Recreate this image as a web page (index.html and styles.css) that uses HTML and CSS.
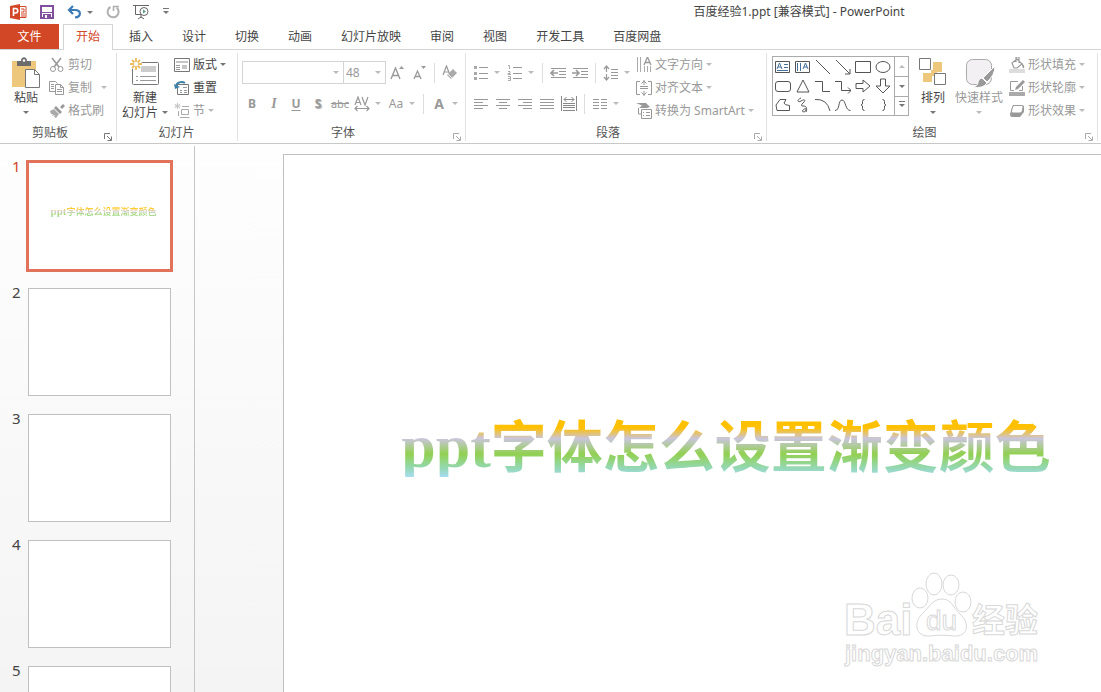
FILE: index.html
```html
<!DOCTYPE html>
<html lang="zh-CN">
<head>
    <meta charset="UTF-8">
    <meta name="viewport" content="width=device-width, initial-scale=1.0">
    <title>百度经验1.ppt - PowerPoint</title>
    <link rel="stylesheet" href="styles.css">
</head>
<body>
    <header class="titlebar">
        <div class="quick-access">
            <svg class="app-icon" width="17" height="16" viewBox="0 0 17 16"><path d="M0 2l10-2v16L0 14z" fill="#d24726"/><path d="M10 2.500h6v11h-6" fill="#fff" stroke="#d24726"/><path d="M11 5h3v3h-3M11 10h4M11 12h4" fill="none" stroke="#d24726"/><path d="M3.500 12V4.500h2a2 2 0 0 1 0 4.500h-2" fill="none" stroke="#fff" stroke-width="1.600"/></svg>
            <button class="quick save" aria-label="保存"><svg width="14" height="14" viewBox="0 0 14 14"><path d="M1 1h12v12H1z" fill="#fff" stroke="#80509f" stroke-width="2"/><path d="M2 7.500h10" stroke="#80509f"/><path d="M3 9h8v4H3z" fill="#80509f"/><path d="M5 10h2v3H5z" fill="#fff"/></svg></button>
            <button class="quick undo" aria-label="撤消"><svg width="15" height="14" viewBox="0 0 15 14"><path d="M2 5h6c7 0 6 7 0 7.500M6 1L2 5l4 4" fill="none" stroke="#3b78b5" stroke-width="2.200"/></svg><i class="caret"></i></button>
            <button class="quick redo" aria-label="重复"><svg width="14" height="14" viewBox="0 0 14 14"><path d="M4.500 2a5.500 5.500 0 1 0 6 .5" fill="none" stroke="#b0b0b0" stroke-width="2"/><path d="M7.500 6V1.500H13" fill="none" stroke="#b0b0b0" stroke-width="1.600"/></svg></button>
            <button class="quick show" aria-label="从头开始"><svg width="17" height="16" viewBox="0 0 17 16"><path d="M0 1.500h16M2.500 2v8.500H8M8 11v3M5 15l3-2 3 2" fill="none" stroke="#666"/><circle cx="11" cy="7.500" r="4" fill="#fff" stroke="#666"/><path d="M10 5.500l3 2-3 2z" fill="#5d9b83"/></svg></button>
            <button class="quick more" aria-label="自定义快速访问工具栏"><i class="caret barred"></i></button>
        </div>
        <div class="window-title">百度经验1.ppt [兼容模式] - PowerPoint</div>
    </header>

    <nav class="tabs">
        <a class="file-tab" href="#file">文件</a>
        <a class="active-tab" href="#home">开始</a>
        <div class="tab-list">
            <a href="#insert">插入</a>
            <a href="#design">设计</a>
            <a href="#transitions">切换</a>
            <a href="#animations">动画</a>
            <a href="#slideshow">幻灯片放映</a>
            <a href="#review">审阅</a>
            <a href="#view">视图</a>
            <a href="#developer">开发工具</a>
            <a href="#netdisk">百度网盘</a>
        </div>
    </nav>

    <div class="ribbon">
        <section class="group clipboard">
            <div class="group-body">
                <button class="big paste">
                    <svg width="30" height="32" viewBox="0 0 30 32"><path d="M1 4h24v26H1z" fill="#ecc77c"/><path d="M6 4h4c0-5 6-5 6 0h4v5H6z" fill="#6c6c6c"/><circle cx="13" cy="3.500" r="1.300" fill="#fff"/><path d="M14.500 12.500h9l5 5v13h-14z" fill="#fff" stroke="#777"/><path d="M23.500 12.500v5h5" fill="none" stroke="#777"/></svg>
                    <span>粘贴</span>
                    <i class="caret"></i>
                </button>
                <div class="stack">
                    <button class="item off"><svg width="16" height="16" viewBox="0 0 16 16"><path d="M3 1l7 9M12 1l-7 9" fill="none" stroke="#999" stroke-width="1.600"/><circle cx="4" cy="12" r="2.500" fill="none" stroke="#999"/><circle cx="11.500" cy="12" r="2.500" fill="none" stroke="#999"/></svg>剪切</button>
                    <button class="item off"><svg width="16" height="16" viewBox="0 0 16 16"><path d="M6 11.500H.5v-10h6l2 2" fill="none" stroke="#999"/><path d="M6.500 4.500h5l3 3v7h-8zM11.500 4.500v3h3M2 4.500h3M2 6.500h3M2 8.500h3M8 9.500h5M8 11.500h5" fill="none" stroke="#999"/></svg>复制<i class="caret spaced"></i></button>
                    <button class="item off"><svg width="16" height="16" viewBox="0 0 16 16"><path d="M11 4l3-3 2 2-3 3z" fill="#999"/><path d="M7 3l6 6-2 2-6-6z" fill="#999"/><path d="M1 8l4-2 5 5-3 4-2-1 1-2-3 1 1-2-2 0z" fill="#aaa"/></svg>格式刷</button>
                </div>
            </div>
            <div class="group-name">剪贴板</div>
            <button class="launcher" aria-label="剪贴板选项"><svg width="8" height="8" viewBox="0 0 8 8"><path d="M.5 6V.5H6M3 3l4 4M7.500 3.500v4h-4" fill="none" stroke="#777"/></svg></button>
        </section>

        <section class="group slides">
            <div class="group-body">
                <button class="big">
                    <svg width="32" height="32" viewBox="0 0 32 32"><rect x="3.500" y="5.500" width="26" height="22" rx="1" fill="#fff" stroke="#777"/><path d="M12 9h15v6H12z" fill="#ccc"/><path d="M7 19.500h2M7 23.500h2M11 19.500h16M11 23.500h16" stroke="#999"/><circle cx="7" cy="7" r="6" fill="#fff"/><path d="M7 1v12M1 7h12M3 3l8 8M11 3l-8 8" stroke="#ecbb62" stroke-width="1.800"/><circle cx="7" cy="7" r="2.200" fill="#fff"/></svg>
                    <span>新建</span>
                    <span class="with-caret">幻灯片<i class="caret"></i></span>
                </button>
                <div class="stack">
                    <button class="item"><svg width="16" height="16" viewBox="0 0 16 16"><path d="M.5 1.500h15v13H.5z" fill="#fff" stroke="#777"/><path d="M2 4h12v2H2zM8 8h5v4H8z" fill="#c5c5c5"/><path d="M2 8.500h4M2 10.500h4M2 12.500h4" stroke="#999"/></svg>版式<i class="caret"></i></button>
                    <button class="item"><svg width="16" height="16" viewBox="0 0 16 16"><path d="M3.500 4.500h11v10h-11z" fill="#fff" stroke="#777"/><path d="M9 7.500h4M6 10.500h2M10 10.500h3M6 12.500h2M10 12.500h3" stroke="#999"/><path d="M2 7c0-5 6-6 9-4" fill="none" stroke="#3b82a8" stroke-width="2"/><path d="M0 4l1 5 5-2z" fill="#3b82a8"/></svg>重置</button>
                    <button class="item off pale"><svg width="16" height="16" viewBox="0 0 16 16"><path d="M3.500 0v6M.5 3h6M1 1l5 4M6 1L1 5" stroke="#c5c5c5"/><path d="M8 3.500h7M6 14.500h9.500M4.500 8v5" stroke="#aaa"/><path d="M7.500 6.500h7v5h-7z" fill="none" stroke="#aaa"/></svg>节<i class="caret"></i></button>
                </div>
            </div>
            <div class="group-name">幻灯片</div>
        </section>

        <section class="group font">
            <div class="group-body rows">
                <div class="row">
                    <span class="combo family"><select aria-label="字体"><option></option></select></span>
                    <span class="combo size"><select aria-label="字号"><option>48</option></select></span>
                    <button class="tool" aria-label="增大字号"><svg width="16" height="16" viewBox="0 0 16 16"><path d="M2 14L6.500 3 11 14M3.500 10.500h6" fill="none" stroke="#999" stroke-width="1.400"/><path d="M10 4l2.500-3L15 4z" fill="#999"/></svg></button>
                    <button class="tool" aria-label="减小字号"><svg width="16" height="16" viewBox="0 0 16 16"><path d="M3 14L6.500 6 10 14M4 11.500h5" fill="none" stroke="#999" stroke-width="1.300"/><path d="M10 1l2.500 3L15 1z" fill="#999"/></svg></button>
                    <i class="sep"></i>
                    <button class="tool" aria-label="清除格式"><svg width="16" height="16" viewBox="0 0 16 16"><path d="M1 10L4.500 1 8 10M2 7h5" fill="none" stroke="#999" stroke-width="1.200"/><path d="M11 4l4 4-6 6-4-4z" fill="#aaa"/><path d="M6 9l4 4" stroke="#eee"/></svg></button>
                </div>
                <div class="row">
                    <button class="tool bold">B</button>
                    <button class="tool italic">I</button>
                    <button class="tool underline">U</button>
                    <button class="tool shadow">S</button>
                    <button class="tool strike">abc</button>
                    <button class="tool drop" aria-label="字符间距"><svg width="16" height="16" viewBox="0 0 16 16"><path d="M1 9l3-8 3 8M2 6.500h4M8 1l3 8 3-8M1 12.500h14M3.500 10L1 12.500 3.500 15M12.500 10l2.500 2.500-2.500 2.500" fill="none" stroke="#999" stroke-width="1.200"/></svg><i class="caret"></i></button>
                    <button class="tool drop"><span>Aa</span><i class="caret"></i></button>
                    <i class="sep"></i>
                    <button class="tool drop color"><span>A</span><i class="caret"></i></button>
                </div>
            </div>
            <div class="group-name">字体</div>
            <button class="launcher off" aria-label="字体选项"><svg width="8" height="8" viewBox="0 0 8 8"><path d="M.5 6V.5H6M3 3l4 4M7.500 3.500v4h-4" fill="none" stroke="#aaa"/></svg></button>
        </section>

        <section class="group paragraph">
            <div class="group-body">
                <div class="rows">
                    <div class="row">
                        <button class="tool drop" aria-label="项目符号"><svg width="16" height="16" viewBox="0 0 16 16"><path d="M1 1h3v3H1zM1 7h3v3H1zM1 12h3v3H1z" fill="#aaa"/><path d="M6 2.500h9M6 8.500h9M6 13.500h9" stroke="#999"/></svg><i class="caret"></i></button>
                        <button class="tool drop" aria-label="编号"><svg width="16" height="16" viewBox="0 0 16 16"><path d="M1 .5h1.500V4M1 6.500h2v2H1v1h3M1 11.500h2.500v4H1M1 13.500h2" fill="none" stroke="#aaa"/><path d="M6 2.500h9M6 8.500h9M6 13.500h9" stroke="#999"/></svg><i class="caret"></i></button>
                        <i class="sep"></i>
                        <button class="tool" aria-label="降低列表级别"><svg width="16" height="16" viewBox="0 0 16 16"><path d="M1 3.500h15M9 6.500h7M9 9.500h7M1 12.500h15" stroke="#999"/><path d="M8 8H1M4 5L1 8l3 3" fill="none" stroke="#999" stroke-width="1.600"/></svg></button>
                        <button class="tool" aria-label="提高列表级别"><svg width="16" height="16" viewBox="0 0 16 16"><path d="M1 3.500h15M9 6.500h7M9 9.500h7M1 12.500h15" stroke="#999"/><path d="M0 8h7M4 5l3 3-3 3" fill="none" stroke="#999" stroke-width="1.600"/></svg></button>
                        <i class="sep"></i>
                        <button class="tool drop" aria-label="行距"><svg width="16" height="16" viewBox="0 0 16 16"><path d="M3.500 1v6M3.500 9v6M1 4l2.500-3L6 4M1 12l2.500 3L6 12" fill="none" stroke="#999" stroke-width="1.200"/><path d="M8 4.500h7M8 7.500h7M8 10.500h7M8 13.500h7" stroke="#999"/></svg><i class="caret"></i></button>
                    </div>
                    <div class="row">
                        <button class="tool" aria-label="左对齐"><svg width="16" height="16" viewBox="0 0 16 16"><path d="M1 3.500h14M1 6.500h9M1 9.500h14M1 12.500h9" stroke="#999"/></svg></button>
                        <button class="tool" aria-label="居中"><svg width="16" height="16" viewBox="0 0 16 16"><path d="M1 3.500h14M4 6.500h8M1 9.500h14M4 12.500h8" stroke="#999"/></svg></button>
                        <button class="tool" aria-label="右对齐"><svg width="16" height="16" viewBox="0 0 16 16"><path d="M1 3.500h14M6 6.500h9M1 9.500h14M6 12.500h9" stroke="#999"/></svg></button>
                        <button class="tool" aria-label="两端对齐"><svg width="16" height="16" viewBox="0 0 16 16"><path d="M1 3.500h14M1 6.500h14M1 9.500h14M1 12.500h14" stroke="#999"/></svg></button>
                        <button class="tool" aria-label="分散对齐"><svg width="16" height="16" viewBox="0 0 16 16"><path d="M.5 0v15M15.500 0v15M3 3.500h10M5.500 1L3 3.500 5.500 6M10.500 1L13 3.500 10.500 6M2 7.500h12M2 9.500h12M2 11.500h12M2 14.500h12" fill="none" stroke="#888"/></svg></button>
                        <i class="sep"></i>
                        <button class="tool drop" aria-label="分栏"><svg width="16" height="16" viewBox="0 0 16 16"><path d="M1 3.500h6M9 3.500h6M1 6.500h6M9 6.500h6M1 9.500h6M9 9.500h6M1 12.500h6M9 12.500h6" stroke="#999"/></svg><i class="caret"></i></button>
                    </div>
                </div>
                <div class="stack">
                    <button class="item off"><svg width="16" height="16" viewBox="0 0 16 16"><path d="M1.500 0v15M4.500 0v15M8.500 9v6M11.500 9v6M14.500 9v6" stroke="#aaa"/><path d="M8 8l3.500-8L15 8M9.500 5.500h4" fill="none" stroke="#999" stroke-width="1.300"/></svg>文字方向<i class="caret"></i></button>
                    <button class="item off"><svg width="16" height="16" viewBox="0 0 16 16"><path d="M4 1.500H.5v13H4M12 1.500h3.500v13H12M4 6.500h8M4 8.500h8M8 0v5M8 11v5M5.500 3.500L8 1l2.500 2.500M5.500 12.500L8 15l2.500-2.500" fill="none" stroke="#999"/></svg>对齐文本<i class="caret"></i></button>
                    <button class="item off"><svg width="16" height="16" viewBox="0 0 16 16"><path d="M0 0h10l4 4-3 1H3l3-2.500z" fill="#999"/><path d="M5.500 6.500h10v9h-10z" fill="#fff" stroke="#999"/><path d="M2.500 5v6h3M7 9.500h1M10 9.500h4M7 12.500h1M10 12.500h4" fill="none" stroke="#999"/></svg>转换为 SmartArt<i class="caret"></i></button>
                </div>
            </div>
            <div class="group-name">段落</div>
            <button class="launcher off" aria-label="段落选项"><svg width="8" height="8" viewBox="0 0 8 8"><path d="M.5 6V.5H6M3 3l4 4M7.500 3.500v4h-4" fill="none" stroke="#aaa"/></svg></button>
        </section>

        <section class="group drawing">
            <div class="group-body">
                <div class="gallery">
                    <div class="shapes">
                        <button aria-label="文本框"><svg width="16" height="16" viewBox="0 0 16 16"><path d="M.5 2.500h14v11H.5z"/><path d="M2 10l2.500-6L7 10M3 8h3M9 5.500h4M9 8.500h4M2 11.500h11" stroke="#41719c"/></svg></button>
                        <button aria-label="竖排文本框"><svg width="16" height="16" viewBox="0 0 16 16"><path d="M.5 2.500h14v11H.5z"/><path d="M2.500 4v8M5.500 4v8M8 10l2.500-6L13 10M9 8h3" stroke="#41719c"/></svg></button>
                        <button aria-label="直线"><svg width="16" height="16" viewBox="0 0 16 16"><path d="M1 1l14 14"/></svg></button>
                        <button aria-label="箭头"><svg width="16" height="16" viewBox="0 0 16 16"><path d="M1 1l14 14M15 10v5h-5"/></svg></button>
                        <button aria-label="矩形"><svg width="16" height="16" viewBox="0 0 16 16"><path d="M.5 2.500h15v11H.5z"/></svg></button>
                        <button aria-label="椭圆"><svg width="16" height="16" viewBox="0 0 16 16"><ellipse cx="8" cy="8" rx="7" ry="5.500"/></svg></button>
                        <button aria-label="圆角矩形"><svg width="16" height="16" viewBox="0 0 16 16"><rect x=".5" y="3.500" width="15" height="10" rx="2.500"/></svg></button>
                        <button aria-label="三角形"><svg width="16" height="16" viewBox="0 0 16 16"><path d="M8 2l6 12H2z"/></svg></button>
                        <button aria-label="肘形连接符"><svg width="16" height="16" viewBox="0 0 16 16"><path d="M0 3.500h7.500v10H15"/></svg></button>
                        <button aria-label="肘形箭头连接符"><svg width="16" height="16" viewBox="0 0 16 16"><path d="M0 3.500h6.500v9H16M13 9.500l3 3-3 3"/></svg></button>
                        <button aria-label="右箭头"><svg width="16" height="16" viewBox="0 0 16 16"><path d="M1 5.500h7V2l7 6-7 6v-3.500H1z"/></svg></button>
                        <button aria-label="下箭头"><svg width="16" height="16" viewBox="0 0 16 16"><path d="M5.500 1h5v7H15l-7 7-7-7h4.500z"/></svg></button>
                        <button aria-label="任意多边形"><svg width="16" height="16" viewBox="0 0 16 16"><path d="M1 8l4-5.500h6L9 6q0 2 5.500 2.500v5H2z"/></svg></button>
                        <button aria-label="自由曲线"><svg width="16" height="16" viewBox="0 0 16 16"><path d="M6 1C1 3 3 6 6 4s5-1 3 1-4 4-1 4 4 1 3 4-5 2-3 0 5-2 3 2"/></svg></button>
                        <button aria-label="弧形"><svg width="16" height="16" viewBox="0 0 16 16"><path d="M0 2.500q12-1 15 11.500"/></svg></button>
                        <button aria-label="曲线"><svg width="16" height="16" viewBox="0 0 16 16"><path d="M0 13.500C5 13.500 3 3 7 3s3 10.500 8.500 10.500"/></svg></button>
                        <button aria-label="左大括号"><svg width="16" height="16" viewBox="0 0 16 16"><path d="M9.500 2.500q-2 0-2 2V7L6 8l1.500 1v2.500q0 2 2 2"/></svg></button>
                        <button aria-label="右大括号"><svg width="16" height="16" viewBox="0 0 16 16"><path d="M7.500 2.500q2 0 2 2V7L11 8 9.500 9v2.500q0 2-2 2"/></svg></button>
                    </div>
                    <div class="gallery-scroll">
                        <button aria-label="上一行"><i class="caret up"></i></button>
                        <button aria-label="下一行"><i class="caret"></i></button>
                        <button aria-label="其他形状"><i class="caret barred"></i></button>
                    </div>
                </div>
                <button class="big arrange">
                    <svg width="28" height="32" viewBox="0 0 28 32"><path d="M14 5h9v10h-9zM4 16h9v9H4z" fill="#ecc77c"/><path d="M12 13h6v6h-6z" fill="#ecc77c"/><path d="M.5 1.500h11v11H.5zM15.500 16.500h11v11h-11z" fill="#fff" stroke="#777"/></svg>
                    <span>排列</span>
                    <i class="caret"></i>
                </button>
                <button class="big off quick-style">
                    <svg width="32" height="32" viewBox="0 0 32 32"><rect x="3.500" y="2.500" width="25" height="25" rx="6" fill="#f3f0f4" stroke="#aaa"/><path d="M32 9L20 21l4 4q8-7 8-16z" fill="#999" stroke="#fff"/><path d="M19 21l5 5q-4 6-14 4 5-1 5-5 1-4 4-4z" fill="#999" stroke="#fff"/></svg>
                    <span>快速样式</span>
                    <i class="caret"></i>
                </button>
                <div class="stack">
                    <button class="item off"><svg width="16" height="16" viewBox="0 0 16 16"><path d="M3 6l5-4 5 5-5 4H5zM7 5V0h3v6" fill="none" stroke="#999" stroke-width="1.200"/><path d="M13 6q3 3 2 5-2 1-2-5z" fill="#999"/><path d="M0 12h16v4H0z" fill="#ddd"/></svg>形状填充<i class="caret"></i></button>
                    <button class="item off"><svg width="16" height="16" viewBox="0 0 16 16"><path d="M9 1.500H1.500v9H5M13.500 6v4.500H10" fill="none" stroke="#999"/><path d="M14 0l2 2-7 7-3 1 1-3z" fill="#999"/><path d="M0 12h16v4H0z" fill="#aaa"/></svg>形状轮廓<i class="caret"></i></button>
                    <button class="item off"><svg width="16" height="16" viewBox="0 0 16 16"><path d="M4 2h9q2 0 2 2v5l-4 5H3q-2 0-2-3z" fill="#999"/><path d="M5.500 2.500h7q2 0 1.500 2l-1 4q-.5 1.500-2 1.500h-7q-2 0-1.500-2l1-4q.5-1.500 2-1.500z" fill="#fff" stroke="#999"/></svg>形状效果<i class="caret"></i></button>
                </div>
            </div>
            <div class="group-name">绘图</div>
            <button class="launcher off" aria-label="绘图选项"><svg width="8" height="8" viewBox="0 0 8 8"><path d="M.5 6V.5H6M3 3l4 4M7.500 3.500v4h-4" fill="none" stroke="#aaa"/></svg></button>
        </section>
    </div>

    <div class="workspace">
        <aside class="thumbnails">
            <a class="thumb selected" href="#slide1"><span class="number">1</span><span class="preview"><span class="gradient-text mini"><b>ppt</b>字体怎么设置渐变颜色</span></span></a>
            <a class="thumb" href="#slide2"><span class="number">2</span><span class="preview"></span></a>
            <a class="thumb" href="#slide3"><span class="number">3</span><span class="preview"></span></a>
            <a class="thumb" href="#slide4"><span class="number">4</span><span class="preview"></span></a>
            <a class="thumb" href="#slide5"><span class="number">5</span><span class="preview"></span></a>
        </aside>
        <main class="editor">
            <div class="slide">
                <h1 class="gradient-text"><b>ppt</b>字体怎么设置渐变颜色</h1>
            </div>
            <svg class="watermark" width="210" height="110" viewBox="0 0 210 110">
                <text class="brand" x="5" y="69">Bai</text>
                <g class="paw">
                    <path d="M103 33c9 0 11 8 17 14 12 10 9 24-5 23-8-1-16-1-24 0-15 1-17-14-7-23 6-6 10-14 19-14z"/>
                    <ellipse cx="81" cy="32" rx="8" ry="10"/>
                    <ellipse cx="95" cy="18" rx="8" ry="11"/>
                    <ellipse cx="112" cy="19" rx="8" ry="10"/>
                    <ellipse cx="124" cy="36" rx="8" ry="10"/>
                </g>
                <text class="du" x="87" y="64">du</text>
                <text class="jingyan" x="133" y="66">经验</text>
                <text class="url" x="6" y="95">jingyan.baidu.com</text>
            </svg>
        </main>
    </div>
</body>
</html>
```
FILE: styles.css
```css
:root {
    --accent: #d24726;
    --text: #444;
    --disabled: #999;
    --line: #d4d4d4;
}
* {
    box-sizing: border-box;
}
body {
    margin: 0;
    height: 100vh;
    display: flex;
    flex-direction: column;
    overflow: hidden;
    font-family: "Noto Sans", "Noto Sans CJK SC", sans-serif;
    font-size: 12px;
    line-height: 16px;
    color: var(--text);
    background: #fff;
}
a {
    color: inherit;
    text-decoration: none;
}
button {
    border: 0;
    padding: 0;
    background: none;
    font: inherit;
    color: inherit;
    white-space: nowrap;
}
svg {
    display: block;
    flex: none;
}

/* drop-down arrows */
.caret {
    flex: none;
    border: 3px solid transparent;
    border-top-color: #777;
    border-bottom: 0;
}
.caret.up {
    border-top: 0;
    border-bottom: 3px solid #bbb;
}
.caret.barred {
    position: relative;
}
.caret.barred::before {
    content: "";
    position: absolute;
    left: -3px;
    top: -6px;
    width: 6px;
    height: 1px;
    background: #777;
}
.off .caret, .tool .caret {
    border-top-color: #bbb;
}

/* title bar */
.titlebar {
    display: flex;
    align-items: center;
    height: 24px;
    padding-left: 10px;
}
.quick-access {
    display: flex;
    align-items: center;
    gap: 13px;
}
.quick {
    display: flex;
    align-items: center;
    gap: 5px;
}
.window-title {
    flex: 1;
    padding-left: 328px;
    text-align: center;
}

/* tabs */
.tabs {
    display: flex;
    height: 26px;
    line-height: 25px;
    border-bottom: 1px solid var(--line);
}
.file-tab {
    width: 59px;
    margin-right: 4px;
    text-align: center;
    color: #fff;
    background: var(--accent);
}
.active-tab {
    height: 26px;
    margin-right: 16px;
    padding: 0 12px;
    line-height: 24px;
    color: var(--accent);
    background: #fff;
    border: 1px solid var(--line);
    border-bottom: 0;
}
.tab-list {
    display: flex;
    gap: 29px;
}

/* ribbon */
.ribbon {
    display: flex;
    height: 94px;
    padding-top: 3px;
    border-bottom: 1px solid #c8c8c8;
}
.group {
    position: relative;
    display: flex;
    flex-direction: column;
    margin-bottom: 2px;
    border-right: 1px solid #e1e1e1;
}
.clipboard { width: 117px; padding-left: 8px; }
.slides { width: 121px; padding-left: 5px; }
.font { width: 228px; padding-left: 3px; }
.paragraph { width: 301px; padding-left: 4px; }
.drawing { width: 331px; padding-left: 5px; }
.group-body {
    display: flex;
    flex: 1;
}
.group-name {
    height: 16px;
    padding-right: 20px;
    text-align: center;
    color: #555;
}
.clipboard .group-name { padding-right: 24px; }
.slides .group-name { padding-right: 6px; }
.launcher {
    position: absolute;
    right: 4px;
    bottom: 0;
}
.big {
    display: flex;
    flex-direction: column;
    align-items: center;
    min-width: 36px;
    height: 66px;
    padding-top: 4px;
    line-height: 15px;
}
.big > svg + span {
    margin-top: 1px;
}
.big > .caret {
    margin-top: 6px;
}
.with-caret {
    display: flex;
    align-items: center;
    gap: 4px;
}
.stack {
    display: flex;
    flex-direction: column;
}
.clipboard .stack { margin-left: 5px; }
.slides .stack { margin-left: 6px; }
.paragraph .stack { margin-left: 2px; }
.drawing .stack { margin-left: 6px; }
.item {
    display: flex;
    align-items: center;
    gap: 3px;
    height: 23px;
}
.item .spaced {
    margin-left: 6px;
}
.off {
    color: var(--disabled);
}
.rows {
    display: flex;
    flex-direction: column;
    gap: 8px;
    padding-top: 8px;
}
.row {
    display: flex;
    align-items: center;
    height: 23px;
}
.tool {
    display: grid;
    place-items: center;
    width: 22px;
    height: 23px;
    color: var(--disabled);
}
.tool.drop {
    width: 34px;
    grid-template-columns: 22px 10px;
}
.sep {
    width: 1px;
    height: 20px;
    margin: 0 4px;
    background: #ddd;
}
.bold { font-weight: bold; }
.italic {
    font-family: "Liberation Serif", serif;
    font-size: 14px;
    font-style: italic;
    font-weight: bold;
}
.underline {
    font-weight: bold;
    text-decoration: underline;
    text-underline-offset: 2px;
}
.shadow {
    font-weight: bold;
    text-shadow: 1px 1px 1px #aaa;
}
.strike {
    font-size: 11px;
    text-decoration: line-through;
}
.color {
    font-size: 14px;
    font-weight: bold;
}
.combo {
    position: relative;
    height: 23px;
    border: 1px solid var(--line);
}
.combo select {
    appearance: none;
    width: 100%;
    height: 21px;
    padding: 0 2px;
    border: 0;
    font: inherit;
    color: var(--disabled);
    background: #fff;
}
.combo::after {
    content: "";
    position: absolute;
    right: 4px;
    top: 9px;
    border: 3px solid transparent;
    border-top-color: #bbb;
    border-bottom: 0;
}
.family {
    width: 102px;
    margin-left: 1px;
}
.size {
    width: 43px;
    margin-left: -1px;
}

/* shape gallery */
.gallery {
    display: flex;
    height: 60px;
    margin-top: 3px;
    border: 1px solid #ababab;
}
.shapes {
    display: grid;
    grid-template-columns: repeat(6, 20px);
    grid-template-rows: repeat(3, 19px);
    padding-right: 1px;
}
.shapes button {
    display: grid;
    place-items: center;
}
.shapes svg {
    fill: none;
    stroke: #555;
}
.gallery-scroll {
    display: grid;
    grid-template-rows: repeat(3, 1fr);
    width: 14px;
    border-left: 1px solid #ababab;
}
.gallery-scroll button {
    display: grid;
    place-items: center;
}
.gallery-scroll button + button {
    border-top: 1px solid #ababab;
}
.arrange { margin-left: 6px; }
.quick-style { margin-left: 4px; }

/* slide list */
.workspace {
    display: flex;
    flex: 1;
    min-height: 0;
    padding-top: 2px;
    background: linear-gradient(#fefefe, #f4f4f4);
}
.thumbnails {
    display: flex;
    flex-direction: column;
    gap: 18px;
    width: 195px;
    padding: 16px 0 0 12px;
    overflow: hidden;
    border-right: 1px solid #c6c6c6;
}
.thumb {
    display: flex;
    flex: none;
}
.number {
    width: 16px;
    line-height: 8px;
    font-size: 15px;
}
.preview {
    display: grid;
    place-items: center;
    width: 143px;
    height: 108px;
    background: #fff;
    border: 1px solid #c0c0c0;
}
.selected .number {
    color: var(--accent);
}
.selected .preview {
    border-color: #e0735a;
    outline: 2px solid #e0735a;
}

/* slide */
.editor {
    position: relative;
    flex: 1;
    padding: 8px 0 0 88px;
    overflow: hidden;
}
.slide {
    height: 100%;
    margin-right: -68px;
    padding-top: 258px;
    text-align: center;
    background: #fff;
    border: 1px solid #c0c0c0;
    border-bottom: 0;
}
.gradient-text {
    display: inline-block;
    margin: 0;
    padding-bottom: 4px;
    font-family: "Noto Sans CJK SC", sans-serif;
    font-size: 56px;
    font-weight: bold;
    line-height: 60px;
    white-space: nowrap;
    color: transparent;
    background: linear-gradient(#ffc000 23%, #c9c5dc 40%, #92d050 64%, #94d8b4 86%, #a8dcf0);
    background-clip: text;
    -webkit-background-clip: text;
}
.gradient-text b {
    font-family: "Liberation Serif", serif;
    font-size: 62px;
    line-height: 1px;
}
.mini {
    margin-bottom: 8px;
    padding: 0 0 1px 8px;
    font-size: 9px;
    line-height: 12px;
    opacity: 0.8;
}
.mini b {
    font-size: 11px;
}

/* watermark */
.watermark {
    position: absolute;
    right: 52px;
    bottom: 16px;
    font-family: "Liberation Sans", sans-serif;
    font-weight: bold;
    fill: #fff;
    stroke: #d8d8d8;
    stroke-width: 1;
}
.brand { font-size: 44px; }
.du { font-size: 28px; font-weight: normal; }
.jingyan {
    font-family: "Noto Sans CJK SC", sans-serif;
    font-size: 33px;
}
.url { font-size: 22px; }
```
